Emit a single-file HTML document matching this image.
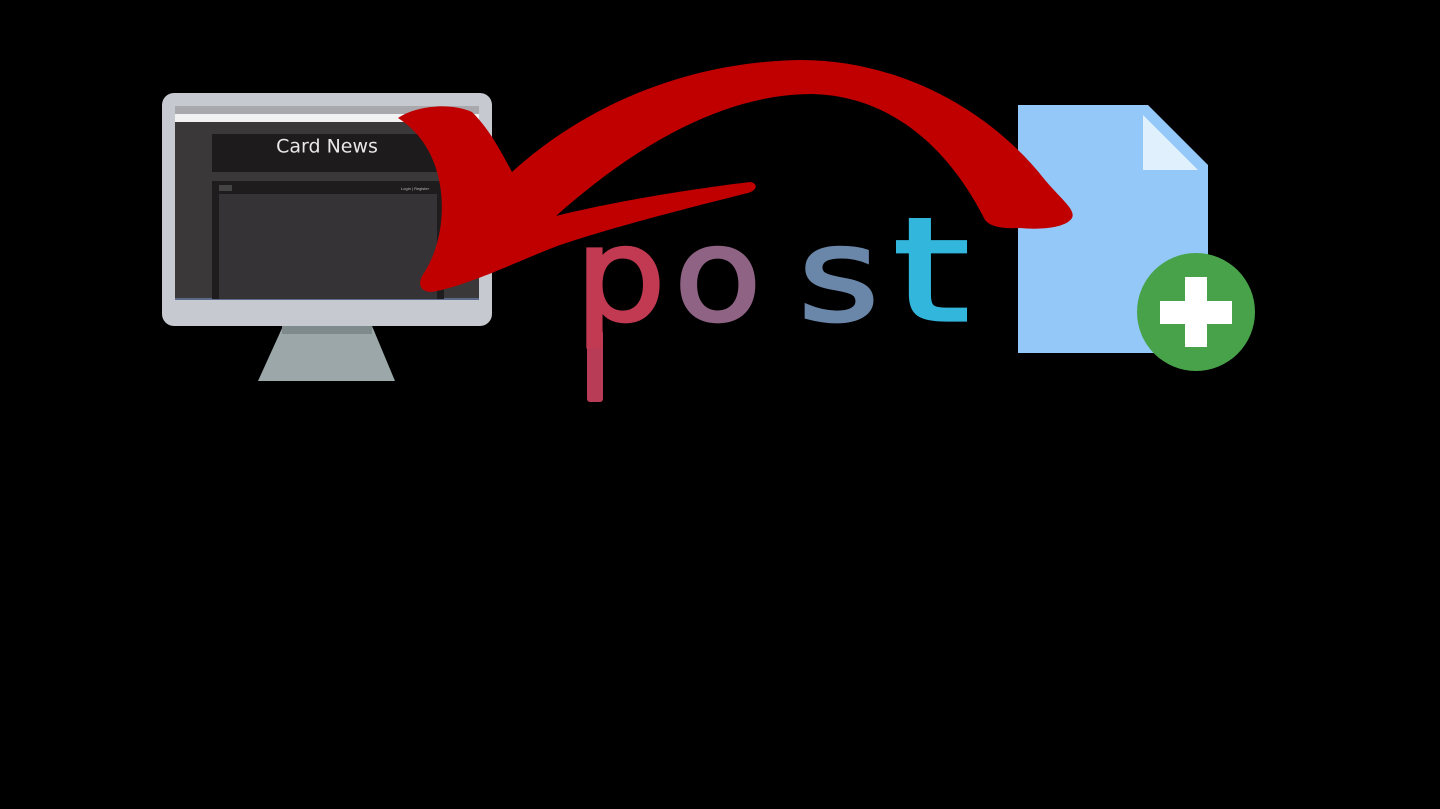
<!DOCTYPE html>
<html><head><meta charset="utf-8"><style>
html,body{margin:0;padding:0;background:#000;width:1440px;height:809px;overflow:hidden}
svg{display:block}
</style></head><body>
<svg width="1440" height="809" viewBox="0 0 1440 809" xmlns="http://www.w3.org/2000/svg">
<rect width="1440" height="809" fill="#000"/>
<path d="M283 326 L372 326 L395 381 L258 381 Z" fill="#9ba7a8"/>
<rect x="282" y="326" width="90" height="8" fill="#7e8a8c"/>
<rect x="162" y="93" width="330" height="233" rx="12" fill="#c6c9cf"/>
<rect x="175" y="106" width="304" height="193" fill="#3a3839"/>
<rect x="175" y="106" width="304" height="8" fill="#a9a9ad"/>
<rect x="175" y="114" width="304" height="8" fill="#f2f2f2"/>
<rect x="175" y="298" width="304" height="2" fill="#5a6a88"/>
<rect x="212" y="134" width="232" height="38" fill="#1d1b1c"/>
<text x="327" y="147" font-family="'DejaVu Sans','Liberation Sans',sans-serif" font-size="19" fill="#e8e8e8" text-anchor="middle" dominant-baseline="middle">Card News</text>
<rect x="212" y="181" width="232" height="118" fill="#1e1c1d"/>
<rect x="219" y="194" width="218" height="105" fill="#353335"/>
<rect x="219" y="185" width="13" height="6" fill="#444"/>
<text x="415" y="189" font-family="'Liberation Sans',sans-serif" font-size="4" fill="#bbb" text-anchor="middle" dominant-baseline="middle">Login | Register</text>
<rect x="587" y="330" width="16" height="72" rx="3" fill="#b83c55"/>
<g font-family="'DejaVu Sans','Liberation Sans',sans-serif" font-size="130" stroke-width="3">
<text x="0" y="0" transform="translate(575 320) scale(1.1 1)" fill="#c23a52" stroke="#c23a52">p</text>
<text x="0" y="0" transform="translate(674 320) scale(1.1 1)" fill="#8f6384" stroke="#8f6384">o</text>
<text x="0" y="0" transform="translate(798 320) scale(1.2 1)" fill="#6a86a8" stroke="#6a86a8">s</text>
<text x="0" y="0" transform="translate(893 320) scale(1.5 1.1)" fill="#33b6dc" stroke="#33b6dc">t</text>
</g>
<path d="M1018 105 L1148 105 L1208 165 L1208 353 L1018 353 Z" fill="#93c8f8"/>
<path d="M1143 115 L1143 170 L1198 170 Z" fill="#e1f0fd"/>
<circle cx="1196" cy="312" r="59" fill="#47a24a"/>
<rect x="1185" y="277" width="22" height="70" fill="#fff"/>
<rect x="1160" y="301" width="72" height="23" fill="#fff"/>
<path fill="#c00000" d="M398 118 C415 106 450 102 472 112 C490 130 500 150 512 172 C580 110 680 62 800 60 C900 60 990 110 1045 180 C1062 200 1076 210 1072 218 C1066 228 1040 230 1020 228 C1000 229 990 226 985 220 C955 160 900 96 812 94 C720 94 630 150 556 216 C620 200 700 188 750 182 C758 183 758 190 748 193 C700 205 620 225 560 245 C520 260 470 285 432 292 C420 292 418 284 422 276 C440 250 445 215 440 185 C435 155 420 132 398 118 Z"/>
</svg>
</body></html>
